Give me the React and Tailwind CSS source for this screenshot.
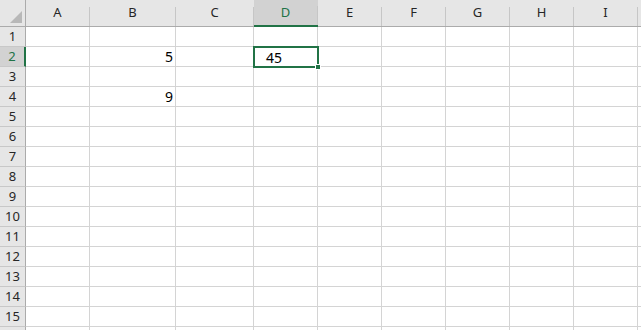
import React from "react";

const cols = ["A", "B", "C", "D", "E", "F", "G", "H", "I", ""];
const rows = Array.from({ length: 16 }, (_, i) => i + 1);

const values = {
  "B2": "5",
  "B4": "9",
};

const ColHeader = ({ label, active }) => (
  <div
    className={
      "flex h-[27px] " +
      (active ? "bg-[#d2d2d2] border-b-2 border-[#217346]" : "bg-[#e6e6e6] border-b border-[#ababab]")
    }
  >
    <div
      className={
        "flex-1 flex items-center justify-center text-[13px] " +
        (active ? "text-[#217346]" : "text-[#262626]")
      }
    >
      {label}
    </div>
    <div className="w-px h-[19px] self-end bg-[#c6c6c6]" />
  </div>
);

const RowHeader = ({ n, active }) => (
  <div
    className={
      "h-[20px] flex items-center justify-center text-[13px] border-b border-[#c8c8c8] " +
      (active
        ? "bg-[#d2d2d2] text-[#217346] border-r-2 border-r-[#217346]"
        : "bg-[#e6e6e6] text-[#262626] border-r border-r-[#ababab]")
    }
  >
    {n}
  </div>
);

const Cell = ({ id }) => {
  const selected = id === "D2";
  return (
    <div
      className={
        "relative h-[20px] border-r border-b border-[#d4d4d4] bg-white text-[14px] text-black flex items-center justify-end pr-[2px] " +
        (selected ? "z-10" : "")
      }
    >
      {values[id] && <span>{values[id]}</span>}
      {selected && (
        <div className="absolute -left-[1px] -top-[1px] w-[66px] h-[22px] border-2 border-[#217346] flex items-center pl-[11px]">
          <span>45</span>
          <div className="absolute -right-[4px] -bottom-[4px] w-[6px] h-[6px] bg-[#217346] border border-white" />
        </div>
      )}
    </div>
  );
};

export default function App() {
  return (
    <div
      className="w-[641px] h-[330px] overflow-hidden bg-white"
      style={{ fontFamily: '"Noto Sans", "Liberation Sans", sans-serif' }}
    >
      <div className="grid grid-cols-[26px_64px_86px_78px_64px_64px_64px_64px_64px_64px_64px] w-max">
        <div className="h-[27px] bg-[#e6e6e6] border-b border-r border-[#ababab] flex items-end justify-end p-[3px]">
          <svg width="12" height="12" viewBox="0 0 12 12">
            <polygon points="12,0 12,12 0,12" fill="#b8b8b8" />
          </svg>
        </div>
        {cols.map((c, i) => (
          <ColHeader key={i} label={c} active={c === "D"} />
        ))}
        {rows.map((r) => (
          <React.Fragment key={r}>
            <RowHeader n={r < 16 ? r : ""} active={r === 2} />
            {cols.map((c, i) => (
              <Cell key={i} id={c + r} />
            ))}
          </React.Fragment>
        ))}
      </div>
    </div>
  );
}
